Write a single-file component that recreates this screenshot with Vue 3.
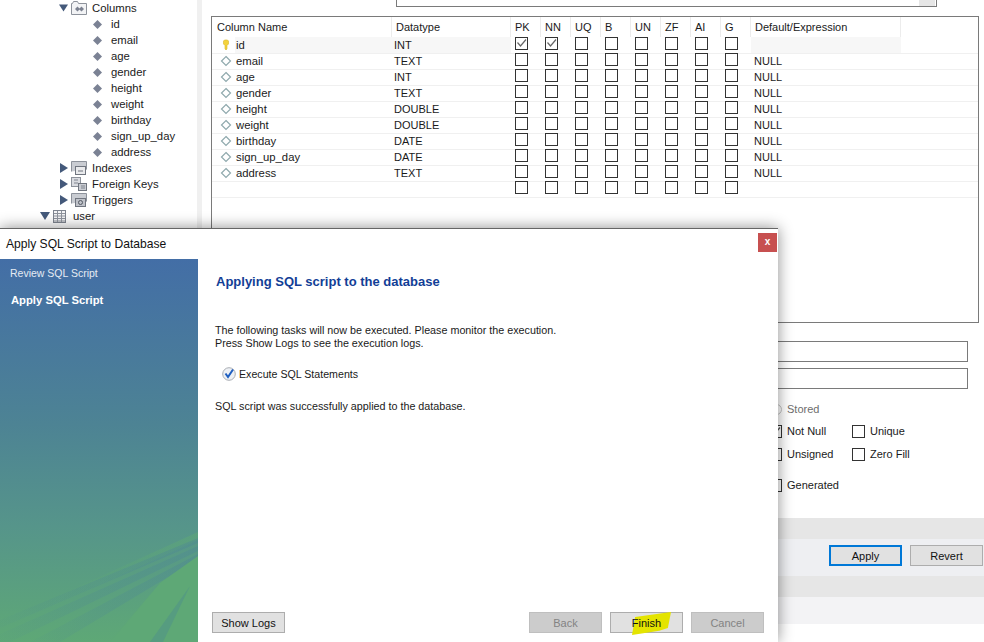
<script setup>
const names = ['id', 'email', 'age', 'gender', 'height', 'weight', 'birthday', 'sign_up_day', 'address']
const types = ['INT', 'TEXT', 'INT', 'TEXT', 'DOUBLE', 'DOUBLE', 'DATE', 'DATE', 'TEXT']
const flags = ['PK', 'NN', 'UQ', 'B', 'UN', 'ZF', 'AI', 'G']
const rows = [
  ...names.map((n, i) => ({ name: n, type: types[i], def: i === 0 ? '' : 'NULL', key: i === 0, item: true })),
  { name: '', type: '', def: '', key: false, item: false }
]
const isChecked = (r, f) => r.key && (f === 'PK' || f === 'NN')
</script>

<template>
  <div class="screen">
    <div class="app">
      <aside class="tree">
        <div class="node lvl3">
          <svg class="arrow" width="10" height="10" viewBox="0 0 10 10"><path d="M0 1h10L5 9z" fill="#44597a"/></svg>
          <svg class="ficon" width="16" height="14" viewBox="0 0 16 14"><path d="M.5 13.5V2.5h1l1-2h4l1 2h8v11z" fill="#f2f3f5" stroke="#8d929b"/><path d="M4 8l2.5-2.5L9 8l-2.500 2.500zM8 8l2.500-2.500L13 8l-2.500 2.500z" fill="#7b8190"/></svg>
          <span>Columns</span>
        </div>
        <div v-for="n in names" :key="n" class="node lvl4">
          <svg class="dia" width="9" height="9" viewBox="0 0 9 9"><path d="M4.500 0L9 4.500 4.500 9 0 4.500z" fill="#7b8294"/></svg>
          <span>{{ n }}</span>
        </div>
        <div class="node lvl3">
          <svg class="arrow" width="9" height="10" viewBox="0 0 9 10"><path d="M1 0l8 5-8 5z" fill="#44597a"/></svg>
          <svg class="ficon" width="16" height="14" viewBox="0 0 16 14"><path d="M.5 10.500V.5h15v8" fill="#c9ccd2" stroke="#8d929b"/><rect x="4.500" y="5.500" width="10" height="8" fill="#e9eaec" stroke="#70757f"/><path d="M7 10h5" stroke="#70757f"/></svg>
          <span>Indexes</span>
        </div>
        <div class="node lvl3">
          <svg class="arrow" width="9" height="10" viewBox="0 0 9 10"><path d="M1 0l8 5-8 5z" fill="#44597a"/></svg>
          <svg class="ficon" width="16" height="14" viewBox="0 0 16 14"><rect x=".5" y=".5" width="9" height="9" fill="#d9dbe0" stroke="#8d929b"/><rect x="7.500" y="6.500" width="8" height="7" fill="#c9ccd2" stroke="#70757f"/><path d="M3 3h4M3 6h4M10 9h4M10 11h4" stroke="#80858f"/></svg>
          <span>Foreign Keys</span>
        </div>
        <div class="node lvl3">
          <svg class="arrow" width="9" height="10" viewBox="0 0 9 10"><path d="M1 0l8 5-8 5z" fill="#44597a"/></svg>
          <svg class="ficon" width="16" height="14" viewBox="0 0 16 14"><path d="M.5 10.500V.5h15v8" fill="#c9ccd2" stroke="#8d929b"/><rect x="4.500" y="5.500" width="10" height="8" fill="#bfc2c9" stroke="#70757f"/><circle cx="9.500" cy="9.500" r="2" fill="none" stroke="#555a64"/></svg>
          <span>Triggers</span>
        </div>
        <div class="node lvl2">
          <svg class="arrow" width="10" height="10" viewBox="0 0 10 10"><path d="M0 1h10L5 9z" fill="#44597a"/></svg>
          <svg class="ticon" width="13" height="13" viewBox="0 0 13 13"><rect x=".5" y=".5" width="12" height="12" fill="#f5f5f7" stroke="#7f8590"/><path d="M1 3.500h11M1 6h11M1 8.500h11M1 11h11M4.500 1v11M8.500 1v11" stroke="#8f949d"/></svg>
          <span>user</span>
        </div>
      </aside>
      <div class="splitter"></div>
      <main class="editor">
        <div class="topbox"><span class="scrollbtn"></span></div>
        <section class="table">
          <div class="thead">
            <div class="c-name">Column Name</div>
            <div class="c-type">Datatype</div>
            <div v-for="f in flags" :key="f" class="c-flag">{{ f }}</div>
            <div class="c-def">Default/Expression</div>
          </div>
          <div v-for="(r, i) in rows" :key="i" class="trow" :class="{ current: r.key }">
            <div class="c-name cell-name">
              <svg v-if="r.key" class="ricon" width="12" height="12" viewBox="0 0 12 12"><path d="M3.500 2C3.500 .5 8.500 .5 8.500 2V5L7 6.500V10L6 11 5 10V6.500L3.500 5z" fill="#f4d33c" stroke="#d8b52a" stroke-width=".6"/></svg>
              <svg v-else-if="r.item" class="ricon" width="12" height="12" viewBox="0 0 12 12"><path d="M6 1.500L10.500 6 6 10.500 1.500 6z" fill="#fff" stroke="#8fa9ad" stroke-width="1.200"/></svg>
              <span class="name-text">{{ r.name }}</span>
            </div>
            <div class="c-type cell-type">{{ r.type }}</div>
            <div v-for="f in flags" :key="f" class="c-flag cell-flag">
              <span class="box">
                <svg v-if="isChecked(r, f)" width="11" height="11" viewBox="0 0 11 11"><path d="M1.500 4.500L4.500 8 10 1.500" fill="none" stroke="#666" stroke-width="1.200"/></svg>
              </span>
            </div>
            <div class="c-def cell-def">{{ r.def }}</div>
          </div>
        </section>
        <div class="field first"></div>
        <div class="field"></div>
        <div class="opts">
          <div class="opt-stored"><span class="radio"></span><span class="muted">Stored</span></div>
          <div class="opt-row tight">
            <span class="opt wide"><span class="box"><svg width="11" height="11" viewBox="0 0 11 11"><path d="M1.500 4.500L4.500 8 10 1.500" fill="none" stroke="#555" stroke-width="1.200"/></svg></span>Not Null</span>
            <span class="opt"><span class="box"></span>Unique</span>
          </div>
          <div class="opt-row">
            <span class="opt wide"><span class="box"></span>Unsigned</span>
            <span class="opt"><span class="box"></span>Zero Fill</span>
          </div>
          <div class="opt-row gen">
            <span class="opt wide"><span class="box"></span>Generated</span>
          </div>
        </div>
        <div class="band-a"></div>
        <div class="band-b">
          <button class="btn focus">Apply</button>
          <button class="btn">Revert</button>
        </div>
        <div class="band-c"><div class="dots"></div></div>
        <div class="band-d"></div>
      </main>
    </div>

    <div class="dialog">
      <header class="titlebar">
        <span>Apply SQL Script to Database</span>
        <span class="close">x</span>
      </header>
      <div class="dbody">
        <nav class="steps">
          <svg class="rays" width="198" height="110" viewBox="0 0 198 110">
            <defs>
              <linearGradient id="rayDark" x1="0" x2="1" y1="0" y2="0">
                <stop offset="0" stop-color="#4f8a92" stop-opacity=".05"/>
                <stop offset="1" stop-color="#4f8a92" stop-opacity=".5"/>
              </linearGradient>
              <linearGradient id="rayLight" x1="0" x2="1" y1="0" y2="0">
                <stop offset="0" stop-color="#5ea876" stop-opacity="0"/>
                <stop offset="1" stop-color="#5ea876" stop-opacity=".55"/>
              </linearGradient>
            </defs>
            <path d="M40 72L198 0V8L40 80z" fill="url(#rayLight)"/>
            <path d="M0 88L198 6V11L0 96z" fill="url(#rayDark)"/>
            <path d="M0 102L198 14V19L10 110H0z" fill="url(#rayDark)"/>
            <path d="M30 110L198 22V27L60 110z" fill="url(#rayDark)"/>
            <path d="M110 110L160 51 198 24V110z" fill="#5ea876"/>
            <path d="M150 110L190 54 163 110z" fill="#569c80"/>
          </svg>
          <div class="step">Review SQL Script</div>
          <div class="step active">Apply SQL Script</div>
        </nav>
        <div class="dmain">
          <h1>Applying SQL script to the database</h1>
          <p class="lead">The following tasks will now be executed. Please monitor the execution.<br>Press Show Logs to see the execution logs.</p>
          <div class="task">
            <svg width="14" height="14" viewBox="0 0 14 14"><circle cx="7" cy="7" r="6.300" fill="#eef1f5" stroke="#a9adb3"/><path d="M3.500 6.500L6 10 11 2.500" fill="none" stroke="#1f5fc0" stroke-width="2"/></svg>
            <span>Execute SQL Statements</span>
          </div>
          <p class="result">SQL script was successfully applied to the database.</p>
          <div class="dfoot">
            <button class="btn">Show Logs</button>
            <div class="foot-right">
              <button class="btn off">Back</button>
              <button class="btn finish"><span class="mark"></span><span class="finish-t">Finish</span></button>
              <button class="btn off">Cancel</button>
            </div>
          </div>
        </div>
      </div>
    </div>
  </div>
</template>

<style scoped>
.screen {
  position: relative;
  width: 984px;
  height: 642px;
  overflow: hidden;
  background: #fff;
  font-family: "Liberation Sans", "DejaVu Sans", sans-serif;
  font-size: 11px;
  color: #1a1a1a;
}
.app { display: flex; height: 642px; }
.tree { width: 197px; flex: none; font-size: 11.3px; }
.node { display: flex; align-items: center; height: 16px; white-space: nowrap; }
.lvl4 { padding-left: 93px; }
.lvl4 .dia { margin-right: 9px; }
.lvl3 { padding-left: 59px; }
.lvl3 .arrow { margin-right: 3px; width: 9px; }
.lvl3 .ficon { margin-right: 5px; }
.lvl2 { padding-left: 40px; }
.lvl2 .arrow { margin-right: 3px; }
.lvl2 .ticon { margin-right: 7px; }
.splitter { width: 5px; flex: none; background: #f0f0f0; }
.editor { flex: 1; min-width: 0; display: flex; flex-direction: column; }
.topbox {
  height: 7px; margin-left: 194px; width: 541px; flex: none;
  border: 1px solid #7a7a7a; border-top: 0; box-sizing: border-box; background: #fff;
  display: flex; justify-content: flex-end; padding-right: 1px;
}
.scrollbtn { width: 16px; height: 6px; background: #e6e6e6; }
.table {
  margin: 9px 5px 0 9px; height: 307px; box-sizing: border-box;
  border: 1px solid #7a7a7a; background: #fff; flex: none;
}
.thead { display: flex; height: 20px; align-items: center; }
.thead > div { border-right: 1px solid #ececec; height: 20px; line-height: 20px; box-sizing: border-box; }
.c-name { width: 180px; flex: none; box-sizing: border-box; }
.c-type { width: 119px; flex: none; box-sizing: border-box; }
.c-flag { width: 30px; flex: none; box-sizing: border-box; }
.c-def { width: 150px; flex: none; box-sizing: border-box; }
.thead .c-name { padding-left: 5px; }
.thead .c-type { padding-left: 4px; }
.thead .c-flag { padding-left: 4px; }
.thead .c-def { padding-left: 4px; }
.trow { display: flex; height: 16px; box-shadow: 0 1px 0 #f0f0f0; }
.cell-name { display: flex; align-items: center; padding-left: 8px; height: 16px; }
.name-text { margin-left: 4px; font-size: 11.3px; }
.ricon { flex: none; }
.cell-type { padding-left: 2px; line-height: 16px; height: 16px; }
.cell-flag { padding-left: 4px; height: 16px; }
.cell-def { padding-left: 3px; line-height: 16px; height: 16px; }
.current .name-text { background: #f7f7f7; flex: 1; line-height: 16px; padding-left: 1px; margin-left: 3px; }
.current .cell-type, .current .cell-def { background: #f7f7f7; }
.box {
  display: inline-flex; align-items: center; justify-content: center;
  width: 13px; height: 13px; box-sizing: border-box; vertical-align: top;
  border: 1px solid #333; background: #fff; flex: none;
}
.field { height: 21px; margin-left: 194px; width: 572px; margin-top: 6px; border: 1px solid #7a7a7a; box-sizing: border-box; flex: none; }
.field.first { margin-top: 18px; }
.opts { margin-left: 567px; margin-top: 12px; height: 117px; flex: none; }
.opt-stored { display: flex; align-items: center; height: 16px; }
.radio { width: 11px; height: 11px; border-radius: 50%; border: 1px solid #c4c4c4; margin: 0 5px 0 2px; box-sizing: border-box; }
.muted { color: #6d6d6d; }
.opt-row { display: flex; margin-top: 7px; height: 16px; }
.opt-row.tight { margin-top: 6px; }
.opt { display: inline-flex; align-items: center; gap: 5px; }
.opt.wide { width: 83px; }
.gen { margin-top: 15px; }
.band-a { height: 21px; background: #e6e6e6; flex: none; }
.band-b {
  height: 37px; background: #eeeff2; flex: none; box-sizing: border-box;
  display: flex; align-items: center; justify-content: flex-end; gap: 8px; padding: 0 1px 4px 0;
}
.band-c { height: 21px; background: #e6e6e6; flex: none; display: flex; align-items: center; }
.dots {
  height: 4px; width: 100%;
  background-image: radial-gradient(#b5b5b5 .6px, transparent .7px);
  background-size: 2px 2px;
}
.band-d { height: 27px; background: #f3f3f5; flex: none; }
.btn {
  width: 73px; height: 21px; padding: 0; box-sizing: border-box;
  background: #e1e1e1; border: 1px solid #adadad; color: #111;
  font: inherit; position: relative;
}
.btn.focus { border: 2px solid #0078d7; }
.btn.off { background: #ccc; border-color: #bfbfbf; color: #838383; }
.dialog {
  position: absolute; left: 0; top: 228px; width: 778px; height: 414px;
  box-sizing: border-box; background: #fff; border-top: 1px solid #666;
  box-shadow: 0 0 14px rgba(0, 0, 0, .45);
  display: flex; flex-direction: column;
}
.titlebar {
  height: 30px; flex: none; display: flex; align-items: center; justify-content: space-between;
  padding: 0 0 0 6px; font-size: 12.1px; color: #111;
}
.close {
  width: 19px; height: 19px; margin-right: 1px; background: #c75050; color: #fff;
  font-weight: 700; font-size: 10px; line-height: 18px; text-align: center; margin-top: -4px;
}
.dbody { flex: 1; display: flex; min-height: 0; }
.steps {
  width: 198px; flex: none; position: relative; padding-top: 6px; box-sizing: border-box; color: #fff;
  background: linear-gradient(#436ea6 0%, #4d8394 43%, #56958a 70%, #5ea876 100%);
}
.rays { position: absolute; left: 0; bottom: 0; }
.step { position: relative; padding-left: 10px; height: 16px; line-height: 16px; margin-bottom: 11px; color: #e4ebf3; font-size: 10.5px; }
.step.active { padding-left: 11px; font-weight: 700; color: #fff; font-size: 11.25px; }
.dmain { flex: 1; min-width: 0; padding-left: 16px; padding-right: 14px; display: flex; flex-direction: column; }
h1 { margin: 14px 0 0 2px; font-size: 13px; line-height: 17px; font-weight: 700; color: #123e96; }
.lead { margin: 34px 0 0 1px; line-height: 13px; font-size: 10.75px; }
.task { display: flex; align-items: center; gap: 3px; margin: 16px 0 0 8px; height: 16px; font-size: 10.65px; }
.result { margin: 16px 0 0 1px; line-height: 16px; font-size: 10.75px; }
.dfoot { margin-top: auto; margin-bottom: 9px; margin-left: -2px; display: flex; justify-content: space-between; }
.foot-right { display: flex; gap: 8px; }
.mark {
  position: absolute; left: 21px; top: -1px; width: 39px; height: 23px;
  background: #e4e400; clip-path: polygon(8% 22%, 100% 0, 92% 70%, 70% 82%, 0 100%);
}
.finish-t { position: relative; }
</style>

<style>
html, body { margin: 0; padding: 0; }
</style>
